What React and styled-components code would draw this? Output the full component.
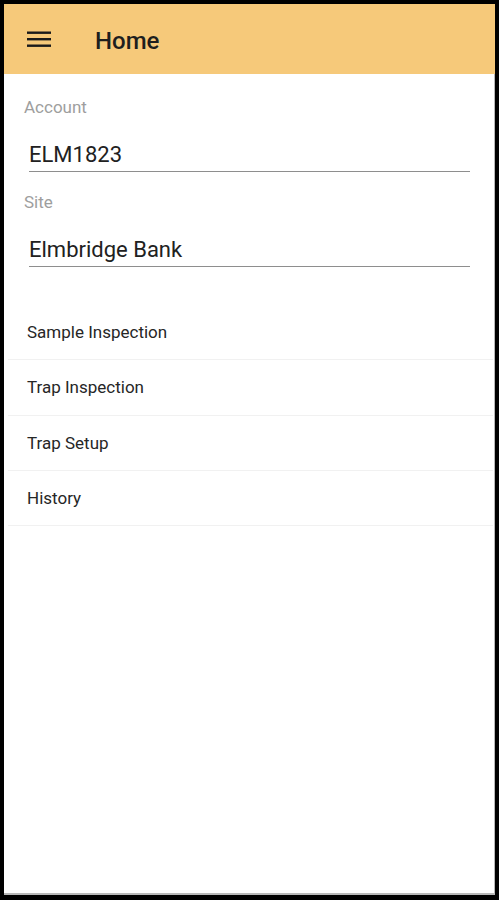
import React from 'react';
import styled, { createGlobalStyle } from 'styled-components';

const GlobalStyle = createGlobalStyle`
  html, body {
    margin: 0;
    padding: 0;
    background: #000;
  }
  body {
    font-family: 'Roboto', 'Liberation Sans', sans-serif;
  }
`;

const Frame = styled.div`
  margin: 4px 4px 5px 4px;
  height: 891px;
  background: #fff;
  display: flex;
  flex-direction: column;
  box-shadow: inset -1px -2px 0 #b8b8b8;
`;

const Header = styled.header`
  height: 70px;
  background: #f6c97a;
  display: flex;
  align-items: center;
  padding-left: 23px;
  flex-shrink: 0;
`;

const MenuButton = styled.button`
  width: 24px;
  height: 24px;
  padding: 0;
  border: none;
  background: none;
  display: flex;
  align-items: center;
  justify-content: center;
  svg {
    display: block;
  }
`;

const Title = styled.h1`
  margin: 3px 0 0 44px;
  font-size: 24px;
  font-weight: 500;
  color: #1e1e1e;
`;

const Form = styled.div`
  padding: 23px 25px 0 20px;
  display: flex;
  flex-direction: column;
`;

const Field = styled.div`
  display: flex;
  flex-direction: column;
  margin-bottom: 19.5px;
  &:last-child {
    margin-bottom: 0;
  }
`;

const Label = styled.label`
  font-size: 17px;
  line-height: 20px;
  color: #9e9e9e;
`;

const Value = styled.div`
  margin: 25px 0 0 5px;
  font-size: 22px;
  line-height: 26px;
  color: #212121;
  padding-bottom: 3px;
  border-bottom: 1.5px solid #8e8e8e;
`;

const Menu = styled.ul`
  list-style: none;
  margin: 38.5px 2px 0 4px;
  padding: 0;
`;

const MenuItem = styled.li`
  height: 54.3px;
  display: flex;
  align-items: center;
  padding-left: 19px;
  font-size: 17px;
  color: #262626;
  border-bottom: 1px solid #f1f1f1;
`;

const MenuIcon = () => (
  <svg width="24" height="24" viewBox="0 0 24 24">
    <rect x="0" y="4.5" width="24" height="2.4" fill="#1a1a1a" />
    <rect x="0" y="11" width="24" height="2.4" fill="#1a1a1a" />
    <rect x="0" y="17.5" width="24" height="2.4" fill="#1a1a1a" />
  </svg>
);

const fields = [
  { label: 'Account', value: 'ELM1823' },
  { label: 'Site', value: 'Elmbridge Bank' },
];

const items = ['Sample Inspection', 'Trap Inspection', 'Trap Setup', 'History'];

export default function App() {
  return (
    <>
      <GlobalStyle />
      <Frame>
        <Header>
          <MenuButton aria-label="menu">
            <MenuIcon />
          </MenuButton>
          <Title>Home</Title>
        </Header>
        <Form>
          {fields.map((f) => (
            <Field key={f.label}>
              <Label>{f.label}</Label>
              <Value>{f.value}</Value>
            </Field>
          ))}
        </Form>
        <Menu>
          {items.map((item) => (
            <MenuItem key={item}>{item}</MenuItem>
          ))}
        </Menu>
      </Frame>
    </>
  );
}
